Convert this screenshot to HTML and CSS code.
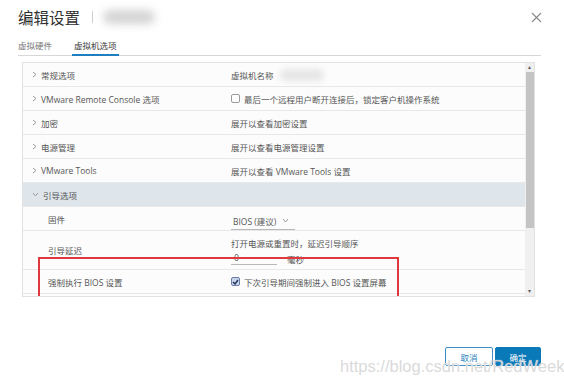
FILE: index.html
```html
<!DOCTYPE html>
<html>
<head>
  <meta charset="UTF-8">
  <title>编辑设置</title>
  <link rel="stylesheet" href="styles.css">
</head>
<body>
  <div class="dialog">
    <div class="head">
      <div class="title-wrap">
        <h1 class="title">编辑设置</h1>
        <span class="sep"></span>
        <span class="blur-name"></span>
      </div>
      <svg class="close" width="11" height="11" viewBox="0 0 11 11"><path d="M1 1 L10 10 M10 1 L1 10" stroke="#8a8a8a" stroke-width="1.1" fill="none"/></svg>
    </div>

    <div class="tabs">
      <span class="tab">虚拟硬件</span>
      <span class="tab active">虚拟机选项</span>
    </div>

    <div class="grid">
      <div class="rows">
        <div class="row">
          <div class="cell-l"><svg class="chev" width="5" height="7" viewBox="0 0 5 7"><path d="M1 1 L4 3.5 L1 6" stroke="#9a9a9a" fill="none"/></svg>常规选项</div>
          <div class="cell-r">虚拟机名称 <span class="blur-vm"></span></div>
        </div>
        <div class="row">
          <div class="cell-l"><svg class="chev" width="5" height="7" viewBox="0 0 5 7"><path d="M1 1 L4 3.5 L1 6" stroke="#9a9a9a" fill="none"/></svg>VMware Remote Console 选项</div>
          <div class="cell-r"><span class="box"></span>最后一个远程用户断开连接后，锁定客户机操作系统</div>
        </div>
        <div class="row">
          <div class="cell-l"><svg class="chev" width="5" height="7" viewBox="0 0 5 7"><path d="M1 1 L4 3.5 L1 6" stroke="#9a9a9a" fill="none"/></svg>加密</div>
          <div class="cell-r">展开以查看加密设置</div>
        </div>
        <div class="row">
          <div class="cell-l"><svg class="chev" width="5" height="7" viewBox="0 0 5 7"><path d="M1 1 L4 3.5 L1 6" stroke="#9a9a9a" fill="none"/></svg>电源管理</div>
          <div class="cell-r">展开以查看电源管理设置</div>
        </div>
        <div class="row">
          <div class="cell-l"><svg class="chev" width="5" height="7" viewBox="0 0 5 7"><path d="M1 1 L4 3.5 L1 6" stroke="#9a9a9a" fill="none"/></svg>VMware Tools</div>
          <div class="cell-r">展开以查看 VMware Tools 设置</div>
        </div>
        <div class="row open">
          <div class="cell-l"><svg class="chev" width="7" height="5" viewBox="0 0 7 5"><path d="M1 1 L3.5 4 L6 1" stroke="#9a9a9a" fill="none"/></svg>引导选项</div>
          <div class="cell-r"></div>
        </div>
        <div class="row">
          <div class="cell-l sub">固件</div>
          <div class="cell-r">
            <span class="select">BIOS (建议)<svg width="7" height="5" viewBox="0 0 7 5"><path d="M1 1 L3.5 4 L6 1" stroke="#9a9a9a" fill="none"/></svg></span>
          </div>
        </div>
        <div class="row tall">
          <div class="cell-l sub">引导延迟</div>
          <div class="cell-r stack">
            <span>打开电源或重置时，延迟引导顺序</span>
            <span class="delay"><span class="num">0</span><span>毫秒</span></span>
          </div>
        </div>
        <div class="row">
          <div class="cell-l sub">强制执行 BIOS 设置</div>
          <div class="cell-r"><span class="box checked"><svg width="7" height="6" viewBox="0 0 7 6"><path d="M1 3 L3 5 L6 1" stroke="#1f2f5a" stroke-width="1.4" fill="none"/></svg></span>下次引导期间强制进入 BIOS 设置屏幕</div>
        </div>
        <div class="row"></div>
      </div>
      <div class="scrollbar">
        <span class="arrow">&#9652;</span>
        <span class="thumb"></span>
        <span class="track"></span>
        <span class="arrow">&#9662;</span>
      </div>
      <div class="mark"></div>
    </div>

    <div class="footer">
      <button class="btn cancel">取消</button>
      <button class="btn ok">确定</button>
    </div>
  </div>
  <div class="watermark">https://blog.csdn.net/RedWeek</div>
</body>
</html>
```

FILE: styles.css
```css
body {
  margin: 0;
  background: #fff;
  font-family: "Open Sans", "Noto Sans CJK SC", sans-serif;
  color: #565656;
  font-size: 8.5px;
}
.dialog {
  width: 564px;
  height: 384px;
  box-sizing: border-box;
  padding: 0 23px 0 18px;
  display: flex;
  flex-direction: column;
}
.head {
  height: 34px;
  display: flex;
  align-items: center;
  justify-content: space-between;
}
.title-wrap {
  display: flex;
  align-items: center;
}
.title {
  margin: 0;
  font-family: "Noto Sans CJK SC", sans-serif;
  font-weight: 400;
  font-size: 15.5px;
  color: #2f2f2f;
}
.sep {
  width: 1px;
  height: 12px;
  background: #cfcfcf;
  margin-left: 12px;
}
.blur-name {
  width: 52px;
  height: 14px;
  margin-left: 10px;
  border-radius: 8px;
  background: #d4d4d4;
  filter: blur(4px);
}
.close {
  margin-right: -1px;
}
.tabs {
  height: 21px;
  display: flex;
  align-items: stretch;
  border-bottom: 1px solid #d7d7d7;
}
.tab {
  display: flex;
  align-items: center;
  color: #7a7a7a;
  padding-top: 1px;
}
.tab.active {
  margin-left: 20px;
  padding: 1px 2px 0;
  color: #3b3b3b;
  border-bottom: 2px solid #1e7fc0;
  margin-bottom: -1px;
}
.grid {
  margin: 6px 6px 0 4px;
  height: 233px;
  border: 1px solid #e2e2e2;
  display: flex;
  overflow: hidden;
  position: relative;
}
.rows {
  flex: 1;
}
.row {
  display: flex;
  height: 23px;
  border-bottom: 1px solid #e8e8e8;
  background: #fcfcfc;
}
.row.open {
  background: #dee5eb;
}
.row.tall {
  height: 38px;
}
.cell-l {
  width: 208px;
  display: flex;
  align-items: center;
  padding-left: 9px;
  box-sizing: border-box;
}
.cell-l.sub {
  padding-left: 25px;
}
.chev {
  margin-right: 4px;
}
.cell-r {
  flex: 1;
  display: flex;
  align-items: center;
}
.blur-vm {
  width: 44px;
  height: 12px;
  margin-left: 6px;
  border-radius: 6px;
  background: #e6e6e6;
  filter: blur(3px);
}
.box {
  width: 9px;
  height: 9px;
  box-sizing: border-box;
  border: 1px solid #9a9a9a;
  border-radius: 2px;
  margin-right: 4px;
  display: flex;
  align-items: center;
  justify-content: center;
  background: #fff;
}
.box.checked {
  border-color: #6c7ea8;
  background: #c9d3ea;
}
.select {
  display: flex;
  align-items: center;
  gap: 6px;
  width: 62px;
  padding: 3px 0 2px 2px;
  border-bottom: 1px solid #b8b8b8;
  margin-top: 4px;
}
.stack {
  flex-direction: column;
  align-items: flex-start;
  justify-content: flex-start;
  padding-top: 6px;
}
.delay {
  display: flex;
  align-items: flex-end;
  gap: 10px;
}
.num {
  width: 43px;
  padding: 3px 0 1px 3px;
  border-bottom: 1px solid #b8b8b8;
}
.delay span:last-child {
  margin-top: -6px;
}
.scrollbar {
  width: 9px;
  background: #f0f0f0;
  display: flex;
  flex-direction: column;
  align-items: center;
  font-size: 6px;
  color: #606060;
}
.arrow {
  height: 9px;
  line-height: 9px;
}
.thumb {
  width: 8px;
  height: 156px;
  background: #c4c4c4;
}
.track {
  flex: 1;
}
.mark {
  position: absolute;
  left: 15px;
  top: 194px;
  width: 357px;
  height: 38px;
  border: 2px solid #e0393d;
}
.footer {
  display: flex;
  justify-content: flex-end;
  gap: 2px;
  margin-top: 50px;
}
.btn {
  width: 48px;
  height: 19px;
  font-family: "Noto Sans CJK SC", sans-serif;
  font-size: 8.5px;
  border-radius: 2px;
  padding: 0;
}
.cancel {
  background: #fff;
  border: 1px solid #3b8fc6;
  color: #1e7fc0;
}
.ok {
  width: 46px;
  background: #0a79b8;
  border: 1px solid #0a79b8;
  color: #fff;
}
.watermark {
  position: absolute;
  left: 340px;
  top: 357px;
  font-family: "Liberation Sans", sans-serif;
  font-size: 16.5px;
  color: rgba(205, 205, 205, 0.75);
  text-shadow: 0 0 1px #fff;
}
```
